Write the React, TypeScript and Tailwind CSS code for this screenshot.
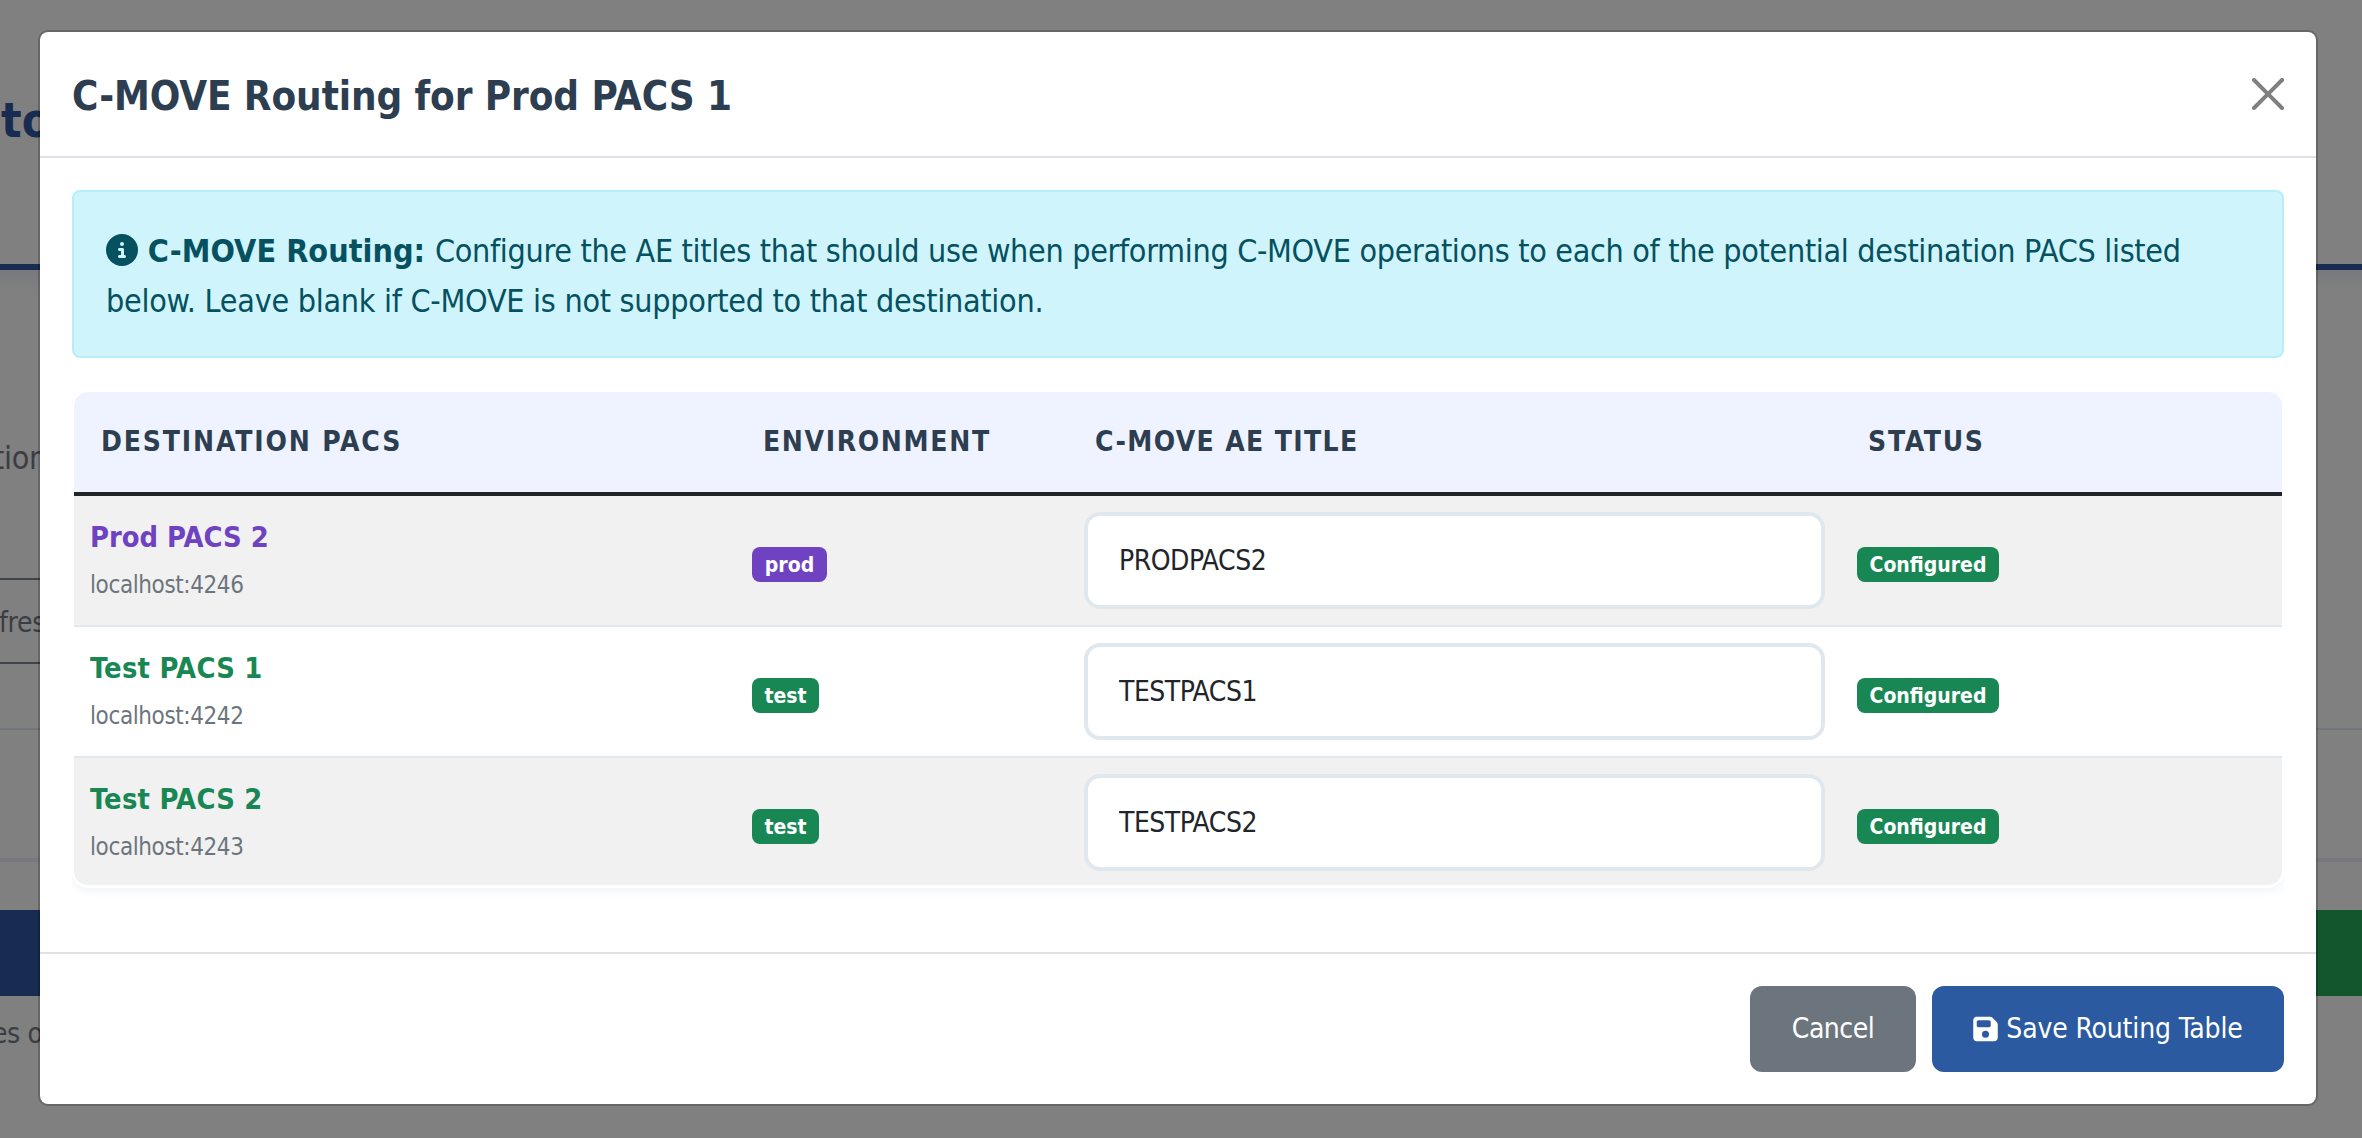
import { FaCircleInfo, FaFloppyDisk } from "react-icons/fa6";

type Route = {
  name: string;
  host: string;
  env: "prod" | "test";
  aeTitle: string;
};

const routes: Route[] = [
  { name: "Prod PACS 2", host: "localhost:4246", env: "prod", aeTitle: "PRODPACS2" },
  { name: "Test PACS 1", host: "localhost:4242", env: "test", aeTitle: "TESTPACS1" },
  { name: "Test PACS 2", host: "localhost:4243", env: "test", aeTitle: "TESTPACS2" },
];

const columns = [
  { label: "Destination PACS", tracking: "tracking-[1.85px]" },
  { label: "Environment", tracking: "tracking-[1.65px]" },
  { label: "C-MOVE AE Title", tracking: "tracking-[1.35px]" },
  { label: "Status", tracking: "tracking-[1.75px]" },
];

/* Dimmed page that stays visible around the dialog. */
function Backdrop() {
  return (
    <div className="flex h-full flex-col overflow-hidden whitespace-nowrap bg-[#808080] text-[#3a3e43]">
      <div className="h-[264px] pl-px pt-[90px] text-[48px] font-bold leading-[60px] text-[#172c50]">to</div>
      <div className="h-1.5 shrink-0 bg-[#172c50]" />
      <div className="h-5 shrink-0 bg-linear-to-b from-[#78797d] to-[#808080]" />
      <div className="h-[288px] shrink-0 pt-[143px]">
        <div className="-ml-[7px] text-[32px] leading-[50px] tracking-[-0.3px]">tion</div>
      </div>
      <div className="h-[86px] w-[60px] shrink-0 border-y-2 border-[#3f444a] text-[28px] leading-[85px] tracking-[-0.3px]">
        <div className="-ml-px">fres</div>
      </div>
      <div className="h-16 shrink-0" />
      <div className="h-0.5 shrink-0 bg-[#70767b]" />
      <div className="h-32 shrink-0" />
      <div className="h-1 shrink-0 bg-[#787880]" />
      <div className="h-12 shrink-0" />
      <div className="flex h-[86px] shrink-0">
        <div className="flex-1 bg-[#172c50]" />
        <div className="flex-1 bg-[#13562e]" />
      </div>
      <div className="-ml-2 pt-[18px] text-[28px] leading-[40px] tracking-[-0.4px]">es o</div>
    </div>
  );
}

function CloseIcon() {
  return (
    <svg viewBox="0 0 16 16" className="size-8 fill-[#808080]">
      <path d="M.293.293a1 1 0 0 1 1.414 0L8 6.586 14.293.293a1 1 0 1 1 1.414 1.414L9.414 8l6.293 6.293a1 1 0 0 1-1.414 1.414L8 9.414l-6.293 6.293a1 1 0 0 1-1.414-1.414L6.586 8 .293 1.707a1 1 0 0 1 0-1.414z" />
    </svg>
  );
}

function RouteRow({ route, index }: { route: Route; index: number }) {
  const prod = route.env === "prod";
  const last = index === routes.length - 1;
  return (
    <div
      className={`grid grid-cols-[662px_332px_773px_441px] items-start px-0 pt-4 ${
        index % 2 === 0 ? "bg-[#f1f1f1]" : "bg-white"
      } ${last ? "h-[127px] rounded-b-[14px]" : "h-[131px] border-b-2 border-[#e1e8ed]"}`}
    >
      <div className="pl-4 pt-0.5">
        <div
          className={`text-[28.8px] font-bold leading-[47px] ${
            prod ? "text-[#6f42c1]" : "tracking-[0.25px] text-[#198754]"
          }`}
        >
          {route.name}
        </div>
        <div className="text-[24px] leading-[49px] tracking-[-0.4px] text-[#6c757d]">{route.host}</div>
      </div>
      <div className="pl-4 pt-[35px]">
        <span
          className={`flex h-[35px] items-center justify-center rounded-lg pt-px text-[21px] font-bold leading-none text-white ${
            prod ? "w-[75px] bg-[#6f42c1]" : "w-[67px] bg-[#198754]"
          }`}
        >
          {route.env}
        </span>
      </div>
      <div className="px-4">
        <input
          defaultValue={route.aeTitle}
          className="block h-[97px] w-full rounded-2xl border-4 border-[#e1e8ed] bg-white pb-px pl-[31px] pr-[30px] text-[28px] tracking-[-0.5px] text-[#212529] outline-none"
        />
      </div>
      <div className="pl-4 pt-[35px]">
        <span className="flex h-[35px] w-[142px] items-center justify-center rounded-lg bg-[#198754] pt-px text-[21px] font-bold leading-none text-white">
          Configured
        </span>
      </div>
    </div>
  );
}

export default function App() {
  return (
    <div className="relative h-screen w-full overflow-hidden font-['DejaVu_Sans_Condensed','DejaVu_Sans',sans-serif]">
      <Backdrop />
      <div
        role="dialog"
        className="absolute left-[38px] top-[30px] flex h-[1076px] w-[2280px] flex-col rounded-[10px] border-2 border-black/20 bg-white bg-clip-padding"
      >
        <header className="flex h-[126px] shrink-0 items-center justify-between border-b-2 border-[#dee2e6] px-8">
          <h1 className="pt-1 text-[40px] font-bold leading-[60px] tracking-[-0.1px] text-[#2c3e50]">
            C-MOVE Routing for Prod PACS 1
          </h1>
          <button aria-label="Close">
            <CloseIcon />
          </button>
        </header>

        <main className="flex h-[794px] shrink-0 flex-col px-8 pt-8">
          <div className="h-[168px] rounded-lg border-2 border-[#b6effb] bg-[#cff4fc] px-8 pt-[34px] text-[32px] leading-[50px] tracking-[-0.32px] text-[#055160]">
            <FaCircleInfo className="mr-px inline-block size-8 align-[-4px]" />{" "}
            <strong className="mr-px tracking-[0.04px]">C-MOVE Routing:</strong> Configure the AE titles that should use
            when performing C-MOVE operations to each of the potential destination PACS listed
            <br />
            <span className="tracking-[-0.27px]">
              below. Leave blank if C-MOVE is not supported to that destination.
            </span>
          </div>

          <div className="mt-8 overflow-hidden pb-8">
            <div className="rounded-2xl bg-white px-0.5 pb-[3px] pt-0.5 shadow-[0_3px_10px_rgba(44,90,160,0.07)]">
              <div className="grid h-[104px] grid-cols-[662px_332px_773px_441px] items-center rounded-t-[14px] border-b-4 border-[#212529] bg-[#eff3ff]">
                {columns.map((c) => (
                  <div
                    key={c.label}
                    className={`pl-[27px] text-[28px] font-bold uppercase leading-[40px] text-[#2c3e50] ${c.tracking}`}
                  >
                    {c.label}
                  </div>
                ))}
              </div>
              {routes.map((r, i) => (
                <RouteRow key={r.name} route={r} index={i} />
              ))}
            </div>
          </div>
        </main>

        <footer className="flex flex-1 items-start justify-end gap-4 border-t-2 border-[#dee2e6] px-8 pt-8 text-[28px] text-white">
          <button className="h-[86px] w-[166px] rounded-xl bg-[#6c757d] tracking-[-0.5px]">Cancel</button>
          <button className="flex h-[86px] w-[352px] items-center justify-center gap-2 rounded-xl bg-[#2c5aa0] tracking-[-0.15px]">
            <FaFloppyDisk className="h-7 w-[25px]" />
            Save Routing Table
          </button>
        </footer>
      </div>
    </div>
  );
}
